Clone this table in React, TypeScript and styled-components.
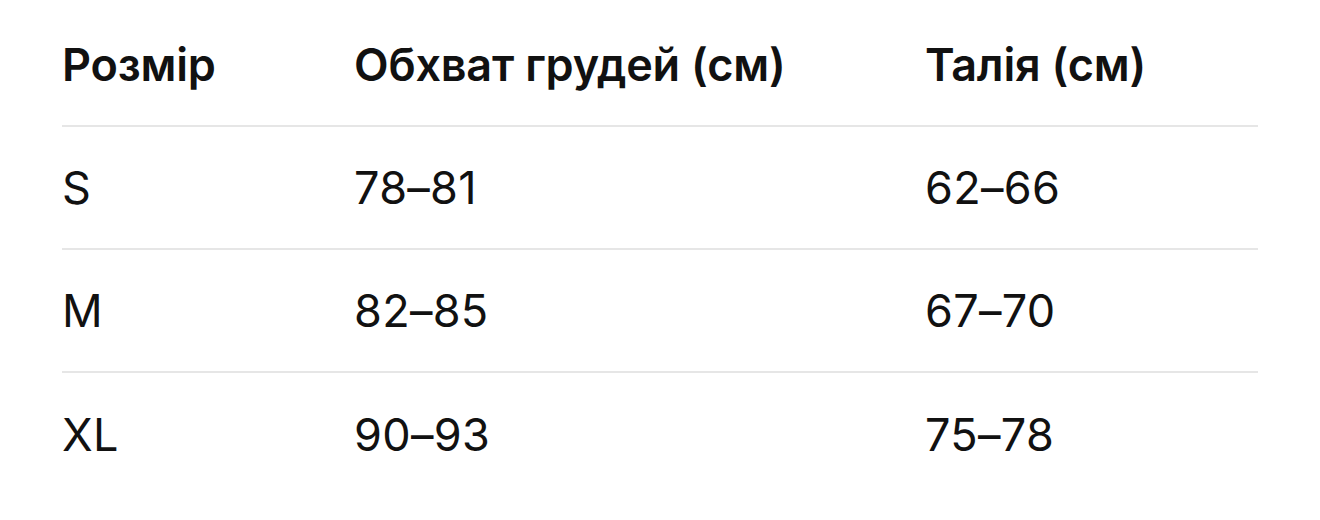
import React from "react";
import styled, { createGlobalStyle } from "styled-components";

const GlobalStyle = createGlobalStyle`
	html, body {
		margin: 0;
		padding: 0;
		background: #ffffff;
	}
	body {
		font-family: Inter, "Noto Sans", "Liberation Sans", sans-serif;
		color: #111111;
		-webkit-font-smoothing: antialiased;
	}
`;

const Wrapper = styled.div`
	padding: 4px 62px 0 62px;
`;

const Table = styled.div`
	display: flex;
	flex-direction: column;
`;

const Row = styled.div<{ $last?: boolean }>`
	display: grid;
	grid-template-columns: 292px 571px 1fr;
	align-items: center;
	height: 123px;
	border-bottom: ${(p) => (p.$last ? "none" : "2px solid #e6e6e6")};
	box-sizing: border-box;
`;

const HeadCell = styled.div`
	font-size: 45px;
	font-weight: 600;
	letter-spacing: -0.2px;
	line-height: 1;
`;

const Cell = styled.div`
	font-size: 45px;
	font-weight: 400;
	letter-spacing: 0.3px;
	line-height: 1;
`;

const sizes = [
	{ size: "S", chest: "78–81", waist: "62–66" },
	{ size: "M", chest: "82–85", waist: "67–70" },
	{ size: "XL", chest: "90–93", waist: "75–78" },
];

const App = (): JSX.Element => {
	return (
		<>
			<GlobalStyle />
			<Wrapper>
				<Table>
					<Row>
						<HeadCell>Розмір</HeadCell>
						<HeadCell>Обхват грудей (см)</HeadCell>
						<HeadCell>Талія (см)</HeadCell>
					</Row>
					{sizes.map((s, i) => (
						<Row key={s.size} $last={i === sizes.length - 1}>
							<Cell>{s.size}</Cell>
							<Cell>{s.chest}</Cell>
							<Cell>{s.waist}</Cell>
						</Row>
					))}
				</Table>
			</Wrapper>
		</>
	);
};

export default App;
